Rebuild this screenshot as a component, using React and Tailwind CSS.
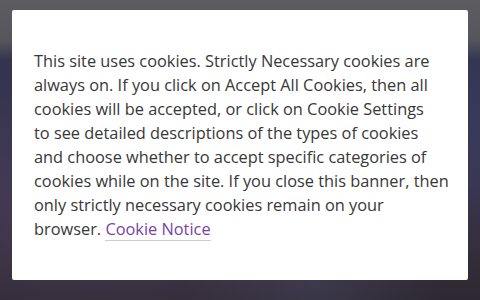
import React from "react";

const lines = [
  "This site uses cookies. Strictly Necessary cookies are",
  "always on. If you click on Accept All Cookies, then all",
  "cookies will be accepted, or click on Cookie Settings",
  "to see detailed descriptions of the types of cookies",
  "and choose whether to accept specific categories of",
  "cookies while on the site. If you close this banner, then",
  "only strictly necessary cookies remain on your",
];

export default function App() {
  return (
    <div className="relative h-[300px] w-[480px] overflow-hidden bg-[linear-gradient(180deg,#5d5c60_0px,#57565c_40px,#34344e_60px,#3a3550_180px,#332d3a_260px,#2d2831_300px)]">
      <div className="absolute inset-0 bg-[radial-gradient(ellipse_at_20%_75%,rgba(90,70,100,0.5),transparent_45%),radial-gradient(ellipse_at_85%_40%,rgba(60,70,120,0.35),transparent_40%),radial-gradient(ellipse_at_65%_95%,rgba(80,80,110,0.4),transparent_30%)]" />
      <div className="relative flex h-full flex-col px-3 pt-[10px] pb-5">
        <div className="h-[270px] w-[456px] rounded-[2px] bg-white pt-[39px] pr-[14px] pl-[22px]">
          <p className="font-['Open_Sans',sans-serif] text-[16.35px] leading-6 whitespace-nowrap text-[#383838]">
            {lines.map((l) => (
              <span key={l} className="block">
                {l}
              </span>
            ))}
            <span className="block">
              browser.{" "}
              <a href="#" className="border-b border-[#cfcfcf] text-[#7b3fa3]">
                Cookie Notice
              </a>
            </span>
          </p>
        </div>
      </div>
    </div>
  );
}
